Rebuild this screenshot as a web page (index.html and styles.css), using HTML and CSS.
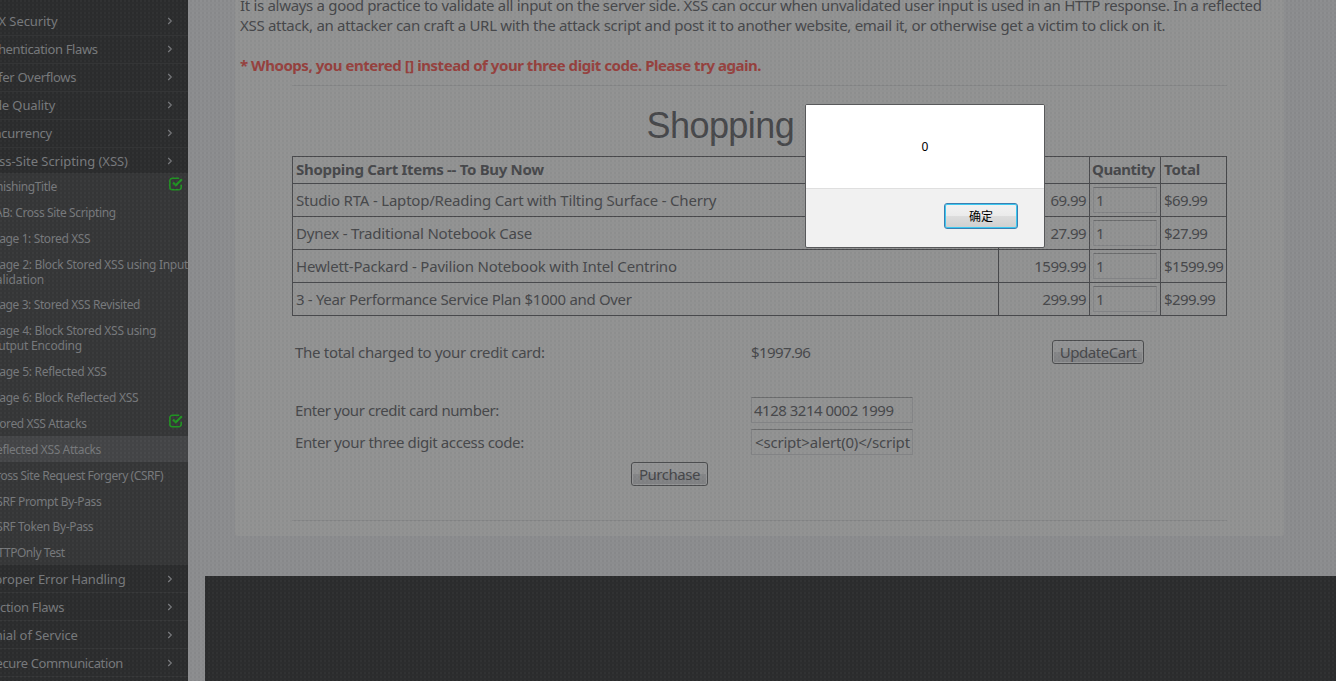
FILE: index.html
```html
<!DOCTYPE html>
<html lang="en">
<head>
<meta charset="utf-8">
<title>Reflected XSS Attacks</title>
<link rel="stylesheet" href="styles.css">
</head>
<body>
<svg class="defs" width="0" height="0" aria-hidden="true">
  <symbol id="chev" viewBox="0 0 6 8"><path d="M1.2 1 L4.3 4 L1.2 7" fill="none" stroke="currentColor" stroke-width="1.2"/></symbol>
  <symbol id="check" viewBox="0 0 14 14"><path d="M12.2 7.8v2.4a2.5 2.5 0 0 1-2.5 2.5H3.4a2.5 2.5 0 0 1-2.5-2.5V3.8a2.5 2.5 0 0 1 2.5-2.5h6.8" fill="none" stroke="currentColor" stroke-width="1.6"/><path d="M4 5.5l2.8 2.8L12.9 2.2" fill="none" stroke="currentColor" stroke-width="2.2"/></symbol>
</svg>
<div class="app">
  <nav class="sidebar">
    <div class="group upper">
      <div class="category"><span class="label t1">AJAX Security</span><svg class="chev"><use href="#chev"/></svg></div>
      <div class="category"><span class="label t4">Authentication Flaws</span><svg class="chev"><use href="#chev"/></svg></div>
      <div class="category"><span class="label t3">Buffer Overflows</span><svg class="chev"><use href="#chev"/></svg></div>
      <div class="category"><span class="label t1">Code Quality</span><svg class="chev"><use href="#chev"/></svg></div>
      <div class="category"><span class="label t3">Concurrency</span><svg class="chev"><use href="#chev"/></svg></div>
      <div class="category open"><span class="label t0">Cross-Site Scripting (XSS)</span><svg class="chev"><use href="#chev"/></svg></div>
    </div>
    <div class="lessons">
      <div class="lesson"><span class="label t4">PhishingTitle</span><svg class="check"><use href="#check"/></svg></div>
      <div class="lesson"><span class="label t4">LAB: Cross Site Scripting</span></div>
      <div class="lesson"><span class="label t4">Stage 1: Stored XSS</span></div>
      <div class="lesson two"><span class="label t3">Stage 2: Block Stored XSS using Input<br><span class="t1">Validation</span></span></div>
      <div class="lesson"><span class="label t4">Stage 3: Stored XSS Revisited</span></div>
      <div class="lesson two"><span class="label t3">Stage 4: Block Stored XSS using<br><span class="t2">Output Encoding</span></span></div>
      <div class="lesson"><span class="label t3">Stage 5: Reflected XSS</span></div>
      <div class="lesson"><span class="label t3">Stage 6: Block Reflected XSS</span></div>
      <div class="lesson"><span class="label t4">Stored XSS Attacks</span><svg class="check"><use href="#check"/></svg></div>
      <div class="lesson active"><span class="label t4">Reflected XSS Attacks</span></div>
      <div class="lesson"><span class="label t5">Cross Site Request Forgery (CSRF)</span></div>
      <div class="lesson"><span class="label t4">CSRF Prompt By-Pass</span></div>
      <div class="lesson"><span class="label t4">CSRF Token By-Pass</span></div>
      <div class="lesson"><span class="label t5">HTTPOnly Test</span></div>
    </div>
    <div class="group">
      <div class="category"><span class="label t2">Improper Error Handling</span><svg class="chev"><use href="#chev"/></svg></div>
      <div class="category"><span class="label t3">Injection Flaws</span><svg class="chev"><use href="#chev"/></svg></div>
      <div class="category"><span class="label t1">Denial of Service</span><svg class="chev"><use href="#chev"/></svg></div>
      <div class="category"><span class="label t4">Insecure Communication</span><svg class="chev"><use href="#chev"/></svg></div>
    </div>
  </nav>
  <div class="page">
    <main class="panel">
      <p class="intro">It is always a good practice to validate all input on the server side. XSS can occur when unvalidated user input is used in an HTTP response. In a reflected<br><span class="second">XSS attack, an attacker can craft a URL with the attack script and post it to another website, email it, or otherwise get a victim to click on it.</span></p>
      <p class="warning">* Whoops, you entered [] instead of your three digit code. Please try again.</p>
      <div class="lesson-body">
        <h1>Shopping Cart</h1>
        <table class="cart">
          <colgroup><col class="c-item"><col class="c-price"><col class="c-qty"><col class="c-total"></colgroup>
          <tr><th class="name">Shopping Cart Items -- To Buy Now</th><th></th><th class="quantity">Quantity</th><th>Total</th></tr>
          <tr><td>Studio RTA - Laptop/Reading Cart with Tilting Surface - Cherry</td><td class="price">69.99</td><td class="qty"><div class="field">1</div></td><td class="sum">$69.99</td></tr>
          <tr><td>Dynex - Traditional Notebook Case</td><td class="price">27.99</td><td class="qty"><div class="field">1</div></td><td class="sum">$27.99</td></tr>
          <tr><td>Hewlett-Packard - Pavilion Notebook with Intel Centrino</td><td class="price">1599.99</td><td class="qty"><div class="field">1</div></td><td class="sum">$1599.99</td></tr>
          <tr><td class="plan">3 - Year Performance Service Plan $1000 and Over</td><td class="price">299.99</td><td class="qty"><div class="field">1</div></td><td class="sum">$299.99</td></tr>
        </table>
        <div class="row total"><span>The total charged to your credit card:</span><span class="amount">$1997.96</span><button class="btn update">UpdateCart</button></div>
        <div class="row number"><span>Enter your credit card number:</span><div class="field wide card">4128 3214 0002 1999</div></div>
        <div class="row code"><span>Enter your three digit access code:</span><div class="field wide script">&lt;script&gt;alert(0)&lt;/script</div></div>
        <div class="buy"><button class="btn purchase">Purchase</button></div>
      </div>
    </main>
    <footer class="footer"></footer>
  </div>
</div>
<div class="dither"></div>
<div class="dialog" role="alertdialog">
  <div class="message">0</div>
  <div class="actions"><button class="ok">确定</button></div>
</div>
</body>
</html>
```
FILE: styles.css
```css
* { box-sizing: border-box; }
body { margin: 0; width: 1336px; height: 681px; overflow: hidden; background: #8b8c8e; color: #47484b; font: 15px/20px "Noto Sans", "Open Sans", sans-serif; }
.defs { position: absolute; }
.app { display: flex; height: 681px; }
.sidebar { width: 188px; flex: none; overflow: hidden; background: #2c2d2e; color: #77797c; padding-top: 8px; }
.category { height: 28px; border-bottom: 1px solid #343536; display: flex; align-items: center; font-size: 13px; white-space: nowrap; }
.upper .category { padding-bottom: 2px; }
.upper .category.open { height: 25px; border: 0; padding: 1px 0 0; }
.label { flex: none; margin-right: auto; }
.category .label { margin-left: -22px; }
.lesson .label { margin-left: -11px; padding-top: 1px; }
.t0 { letter-spacing: -.04px; }
.t1 { letter-spacing: -.09px; }
.t2 { letter-spacing: -.18px; }
.t3 { letter-spacing: -.29px; }
.t4 { letter-spacing: -.38px; }
.t5 { letter-spacing: -.45px; }
.chev { width: 6px; height: 8px; margin-right: 15px; flex: none; }
.lessons { background: #363738; font-size: 12px; line-height: 15px; }
.lesson { height: 25.85px; display: flex; align-items: center; white-space: nowrap; }
.lesson.two { height: 41px; }
.lesson.active { background: #444547; }
.check { width: 14px; height: 14px; color: #209322; margin: -4px 5px 0 0; flex: none; }
.page { flex: 1; display: flex; flex-direction: column; }
.panel { width: 1049px; height: 536px; margin-left: 47px; background: #919292; padding: 0 5px; border-radius: 0 0 3px 3px; }
.intro { margin: -5px 0 0; white-space: nowrap; height: 40px; letter-spacing: -.31px; }
.second { letter-spacing: -.295px; }
.warning { margin: 20px 0 10px; font-weight: bold; color: #96413e; white-space: nowrap; letter-spacing: -.455px; }
.lesson-body { margin: 0 52px; width: 935px; height: 436px; border-top: 1px solid #858687; border-bottom: 1px solid #858687; }
h1 { margin: 19px 0 10px; padding-right: 3px; font: 36px/41px "Liberation Sans", Arial, sans-serif; text-align: center; letter-spacing: -.55px; }
.cart { width: 935px; border-collapse: collapse; table-layout: fixed; white-space: nowrap; }
.c-item { width: 706px; }
.c-price { width: 91px; }
.c-qty { width: 71px; }
.c-total { width: 66px; }
.cart th, .cart td { border: 1px solid #48494c; padding: 0 3px; height: 33px; text-align: left; letter-spacing: -.2px; }
.cart th { height: 27px; padding-bottom: 2px; }
.cart .name { letter-spacing: -.3px; }
.cart .quantity { padding-left: 2px; padding-right: 0; letter-spacing: -.45px; }
.cart .plan { letter-spacing: -.33px; }
.cart .price { text-align: right; letter-spacing: -.55px; }
.cart .sum { letter-spacing: -.6px; }
.cart .qty { padding: 0 1px 0 3px; }
.field { width: 64px; height: 26px; border: 1px solid #828385; border-top-color: #6b6c6e; border-radius: 1px; padding: 0 2px; line-height: 25px; overflow: hidden; white-space: nowrap; }
.field.wide { width: 162px; line-height: 24px; }
.field.card { letter-spacing: -.5px; }
.field.script { padding-left: 3px; letter-spacing: -.19px; }
.row { display: grid; grid-template-columns: 456px 301px auto; align-items: center; height: 26px; padding-left: 3px; white-space: nowrap; letter-spacing: -.3px; }
.row.total { margin: 23px 0 32px; }
.row.number { letter-spacing: -.43px; }
.row.code { margin-top: 6px; letter-spacing: -.38px; }
.amount { letter-spacing: -.6px; }
.btn { height: 24px; border: 1px solid #4c4d4f; border-radius: 3px; padding: 0; font: inherit; color: #47484b; background: linear-gradient(#919293 50%, #858688 50%, #7f8082); box-shadow: inset 0 0 0 1px #949596; line-height: 22px; letter-spacing: -.45px; }
.update { width: 92px; }
.purchase { width: 77px; }
.buy { margin: 7px 0 0 339px; display: flex; }
.footer { margin: 40px 0 0 17px; flex: 1; background: #2c2d2e; }
.dither { position: absolute; inset: 0; opacity: .06; background: conic-gradient(#000 25%, transparent 0) 0 0 / 4px 4px, conic-gradient(#fff 25%, transparent 0) 2px 0 / 4px 4px; background-size: 4px 4px; opacity: .025; }
.dialog { position: absolute; left: 805px; top: 104px; width: 240px; height: 144px; border: 1px solid #58595b; border-radius: 2px; background: #f1f1f1; color: #000; font-size: 12px; overflow: hidden; }
.message { height: 84px; background: #fff; border-bottom: 1px solid #dfdfdf; text-align: center; line-height: 83px; }
.actions { display: flex; justify-content: flex-end; padding: 14px 26px; }
.ok { width: 74px; height: 26px; border: 1px solid #3c7fb1; border-radius: 3px; box-shadow: inset 0 0 0 1px #3cc8f0; background: linear-gradient(#f2f2f2, #ebebeb 50%, #dddddd 50%, #cfcfcf); font: 12px/22px "Noto Sans CJK SC", sans-serif; padding: 0; color: #000; }
```
